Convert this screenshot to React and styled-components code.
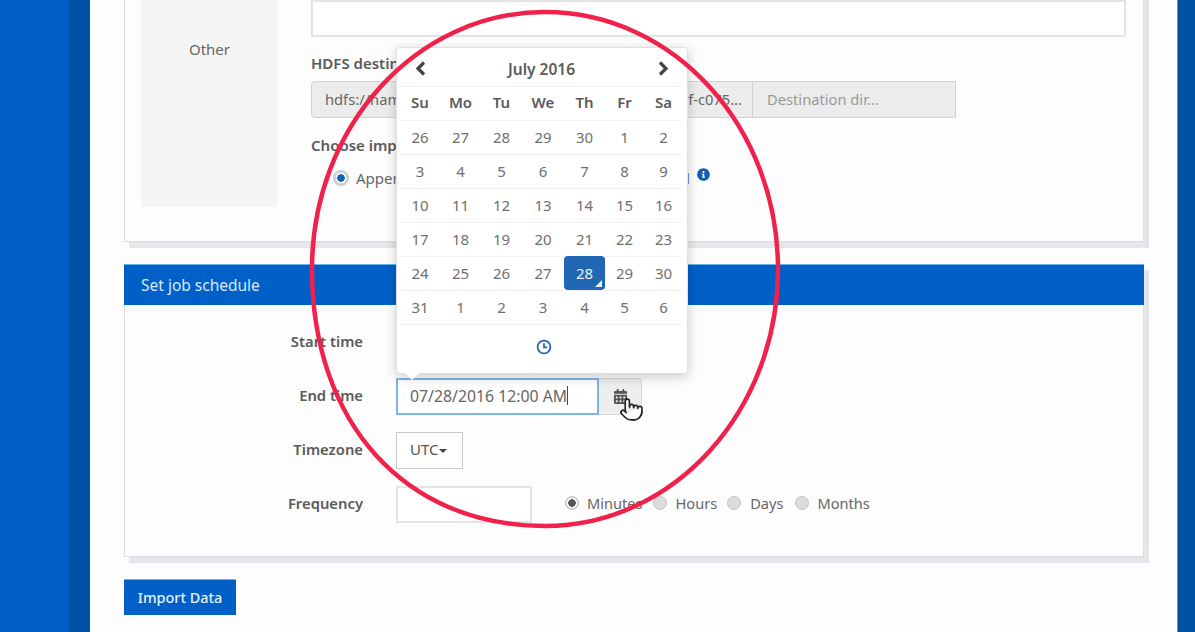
import React from "react";
import styled, { createGlobalStyle } from "styled-components";
import { FaCalendarAlt, FaInfoCircle } from "react-icons/fa";
import { Pointer } from "lucide-react";

const GlobalStyle = createGlobalStyle`
  html, body {
    margin: 0;
    padding: 0;
    background: #fdfdfd;
    overflow: hidden;
  }
  * { box-sizing: border-box; }
`;

const Page = styled.div`
  position: relative;
  display: grid;
  grid-template-columns: 69px 21px 1fr 18px;
  width: 1195px;
  height: 632px;
  overflow: hidden;
  font-family: "Noto Sans", sans-serif;
  font-size: 15px;
  line-height: 20px;
  color: #666;
`;

const SideBlue = styled.div`
  background: #0060c8;
`;

const SideDark = styled.div`
  background: #0050a6;
  border-left: ${({ $edge }) => ($edge ? "1px solid #3d9be8" : "none")};
`;

const Main = styled.main`
  padding: 0 33px 0 34px;
  background: #fdfdfd;
`;

const Card = styled.section`
  background: #fdfdfd;
  border: 1px solid #dcdce1;
  box-shadow: 5px 6px 0 #e6e6ea;
`;

const SourceCard = styled(Card)`
  display: grid;
  grid-template-columns: 137px 1fr;
  column-gap: 33px;
  margin-top: -40px;
  height: 282px;
  padding-left: 16px;
  padding-right: 17px;
`;

const SourceType = styled.div`
  height: 246px;
  padding-top: 78px;
  text-align: center;
  background: #f5f5f5;
`;

const SourceForm = styled.div`
  padding-top: 39px;
`;

const TextBox = styled.input`
  display: block;
  width: ${({ $width }) => $width || "100%"};
  height: 37px;
  padding: 0 14px;
  border: 2px solid #e4e4e4;
  background: #fff;
  outline: none;
`;

const FieldLabel = styled.div`
  margin-top: ${({ $top }) => $top}px;
  font-weight: 600;
  color: #5a5a5a;
`;

const PathGroup = styled.div`
  display: grid;
  grid-template-columns: 442px 203px;
  width: 645px;
  height: 37px;
  margin-top: 8px;
  font-size: 14.7px;
`;

const PathPart = styled.div`
  display: flex;
  justify-content: space-between;
  align-items: center;
  padding: 0 10px 2px 13px;
  background: #ececec;
  border: 1px solid #d2d2d2;
  border-radius: 4px 0 0 4px;
  white-space: nowrap;
`;

const DirPart = styled.div`
  display: flex;
  align-items: center;
  padding: 0 14px 2px;
  background: #ececec;
  border: 1px solid #d2d2d2;
  border-left: none;
  color: #999;
`;

const ModeRow = styled.div`
  display: flex;
  align-items: center;
  height: 20px;
  margin-top: 13px;
  padding-left: 22px;
`;

const RadioDot = styled.span`
  flex: none;
  width: ${({ $size }) => $size}px;
  height: ${({ $size }) => $size}px;
  margin-right: ${({ $gap }) => $gap}px;
  border-radius: 50%;
  background: ${({ $on, $tone }) =>
    $on
      ? `radial-gradient(circle, ${$tone} 0 3.5px, #fff 4px 5px, #d4d4d4 5.5px)`
      : "#dcdcdc"};
  border: 1px solid #c4c4c4;
`;

const ModeSpacer = styled.span`
  width: ${({ $width }) => $width}px;
`;

const InfoIcon = styled(FaInfoCircle)`
  margin: -8px 0 0 7px;
  width: 13px;
  height: 13px;
  color: #0f5fb5;
`;

const ScheduleCard = styled(Card)`
  margin-top: 22px;
`;

const ScheduleHeader = styled.h2`
  margin: -1px -1px 0;
  height: 41px;
  padding: 0 17px;
  font-size: 15.5px;
  font-weight: 400;
  line-height: 40px;
  color: #d5e9fb;
  background: #0060c8;
  border-top: 1px solid #66b2ee;
`;

const ScheduleBody = styled.div`
  display: grid;
  row-gap: 17px;
  padding: 19px 0 33px;
`;

const ScheduleRow = styled.div`
  display: grid;
  grid-template-columns: 238px 1fr;
  column-gap: 33px;
  align-items: center;
  height: 37px;
`;

const RowLabel = styled.div`
  padding-bottom: 4px;
  text-align: right;
  font-size: 14.8px;
  font-weight: 600;
  color: #5a5a5a;
`;

const Controls = styled.div`
  display: flex;
  align-items: center;
`;

const DateField = styled.div`
  position: relative;
  display: grid;
  grid-template-columns: 203px 43px;
  height: 37px;
`;

const DateText = styled.div`
  display: flex;
  align-items: center;
  padding: 0 12px 2px 12px;
  background: #fff;
  font-size: 15.8px;
  white-space: nowrap;
  border: ${({ $focus }) => ($focus ? "2px solid #7db4ea" : "1px solid #d8d8d8")};
`;

const Caret = styled.span`
  width: 1px;
  height: 19px;
  background: #444;
`;

const CalendarAddon = styled.div`
  display: flex;
  align-items: center;
  justify-content: center;
  background: #eee;
  border: 1px solid #d6d6d6;
  border-left: none;
  border-radius: 0 4px 4px 0;
  color: #555;
`;

const HandCursor = styled(Pointer)`
  position: absolute;
  left: 223px;
  top: 17px;
  width: 25px;
  height: 29px;
  fill: #fff;
  stroke: #222;
  stroke-width: 1.6;
`;

const DropButton = styled.div`
  display: flex;
  align-items: center;
  width: 67px;
  height: 37px;
  padding: 0 0 3px 13px;
  border: 1px solid #c8c8c8;
  background: #fff;
  color: #555;
`;

const DownCaret = styled.span`
  width: 0;
  height: 0;
  margin-top: 3px;
  border-left: 4px solid transparent;
  border-right: 4px solid transparent;
  border-top: 4px solid #444;
`;

const UnitOption = styled.label`
  display: flex;
  align-items: center;
  margin-left: ${({ $left }) => $left}px;
  padding-bottom: 4px;
  font-size: 14.6px;
`;

const ImportButton = styled.button`
  display: block;
  width: 112px;
  height: 36px;
  margin-top: 22px;
  padding: 0;
  border: none;
  border-top: 1px solid #66b2ee;
  background: #0060c8;
  color: #e8f2fc;
  font: 500 14.4px "Noto Sans", sans-serif;
`;

const Popup = styled.div`
  position: absolute;
  left: 0;
  bottom: calc(100% + 4px);
  z-index: 5;
  width: 292px;
  height: 327px;
  padding: 4px 4px 0 3px;
  background: #fff;
  border: 1px solid #e0e0e0;
  border-radius: 4px;
  box-shadow: 0 3px 12px rgba(0, 0, 0, 0.2);

  &::after {
    content: "";
    position: absolute;
    left: 8px;
    bottom: -7px;
    border-left: 7px solid transparent;
    border-right: 7px solid transparent;
    border-top: 7px solid #fff;
  }
`;

const CalGrid = styled.div`
  display: grid;
  grid-template-columns: 40px 41px 41px 42px 41px 39px 39px;
  grid-auto-rows: 34px;
  align-items: center;
  justify-items: center;
`;

const MonthBar = styled.div`
  grid-column: 1 / -1;
  justify-self: stretch;
  display: grid;
  grid-template-columns: 40px 1fr 40px;
  align-items: center;
  justify-items: center;
  height: 34px;
  font-size: 15.5px;
  font-weight: 600;
  color: #5a5a5a;
`;

const Chevron = styled.svg`
  width: 13px;
  height: 15px;
  fill: none;
  stroke: #444;
  stroke-width: 3.2;
  margin-top: -2px;
`;

const WeekDay = styled.div`
  justify-self: stretch;
  align-self: stretch;
  line-height: 31px;
  text-align: center;
  font-weight: 600;
  color: #5a5a5a;
  border-top: 1px solid #f3f3f3;
`;

const Day = styled.div`
  position: relative;
  justify-self: stretch;
  align-self: stretch;
  line-height: 33px;
  text-align: center;
  color: ${({ $selected }) => ($selected ? "#e9f1fa" : "#6f6f6f")};
  background: ${({ $selected }) => ($selected ? "#2068b4" : "transparent")};
  border-radius: ${({ $selected }) => ($selected ? "4px" : "0")};
  border-top: 1px solid ${({ $selected }) => ($selected ? "#2068b4" : "#f3f3f3")};

  ${({ $selected }) =>
    $selected &&
    `&::after {
      content: "";
      position: absolute;
      right: 3px;
      bottom: 3px;
      border-left: 7px solid transparent;
      border-bottom: 7px solid #e9f1fa;
    }`}
`;

const ClockRow = styled.div`
  display: flex;
  justify-content: center;
  align-items: center;
  height: 44px;
  border-top: 1px solid #f3f3f3;
  padding: 1px 0 0 5px;
`;

const Annotation = styled.svg`
  position: absolute;
  left: 0;
  top: 0;
  z-index: 10;
  width: 1195px;
  height: 632px;
  pointer-events: none;
`;

const weekDays = ["Su", "Mo", "Tu", "We", "Th", "Fr", "Sa"];
const days = [
  26, 27, 28, 29, 30, 1, 2, 3, 4, 5, 6, 7, 8, 9, 10, 11, 12, 13, 14, 15, 16, 17,
  18, 19, 20, 21, 22, 23, 24, 25, 26, 27, 28, 29, 30, 31, 1, 2, 3, 4, 5, 6,
];

const DatePopup = () => (
  <Popup>
    <CalGrid>
      <MonthBar>
        <Chevron viewBox="0 0 13 15">
          <path d="M10 1.5 4 7.5l6 6" />
        </Chevron>
        <span>July 2016</span>
        <Chevron viewBox="0 0 13 15">
          <path d="M3 1.5l6 6-6 6" />
        </Chevron>
      </MonthBar>
      {weekDays.map((d) => (
        <WeekDay key={d}>{d}</WeekDay>
      ))}
      {days.map((d, i) => (
        <Day key={i} $selected={i === 32}>
          {d}
        </Day>
      ))}
    </CalGrid>
    <ClockRow>
      <svg width="16" height="16" viewBox="0 0 16 16" fill="none" stroke="#2a68b0" strokeWidth="1.8">
        <circle cx="8" cy="8" r="6.4" />
        <path d="M8 4.2V8.4h3.2" />
      </svg>
    </ClockRow>
  </Popup>
);

const App = () => {
  return (
    <Page>
      <GlobalStyle />
      <SideBlue />
      <SideDark />
      <Main>
        <SourceCard>
          <SourceType>Other</SourceType>
          <SourceForm>
            <TextBox readOnly />
            <FieldLabel $top={16}>HDFS destination</FieldLabel>
            <PathGroup>
              <PathPart>
                <span>hdfs://namenode</span>
                <span>f-c075...</span>
              </PathPart>
              <DirPart>Destination dir...</DirPart>
            </PathGroup>
            <FieldLabel $top={17}>Choose import mode</FieldLabel>
            <ModeRow>
              <RadioDot $on $tone="#0f62c0" $size={16} $gap={7} />
              <span>Append</span>
              <ModeSpacer $width={189} />
              <span>Overwrite all</span>
              <InfoIcon />
            </ModeRow>
          </SourceForm>
        </SourceCard>

        <ScheduleCard>
          <ScheduleHeader>Set job schedule</ScheduleHeader>
          <ScheduleBody>
            <ScheduleRow>
              <RowLabel>Start time</RowLabel>
              <Controls>
                <DateField>
                  <DateText />
                  <CalendarAddon />
                </DateField>
              </Controls>
            </ScheduleRow>
            <ScheduleRow>
              <RowLabel>End time</RowLabel>
              <Controls>
                <DateField>
                  <DatePopup />
                  <DateText $focus>
                    07/28/2016 12:00 AM
                    <Caret />
                  </DateText>
                  <CalendarAddon>
                    <FaCalendarAlt size={15} />
                  </CalendarAddon>
                  <HandCursor />
                </DateField>
              </Controls>
            </ScheduleRow>
            <ScheduleRow>
              <RowLabel>Timezone</RowLabel>
              <Controls>
                <DropButton>
                  UTC
                  <DownCaret />
                </DropButton>
              </Controls>
            </ScheduleRow>
            <ScheduleRow>
              <RowLabel>Frequency</RowLabel>
              <Controls>
                <TextBox $width="136px" readOnly />
                <UnitOption $left={33}>
                  <RadioDot $on $tone="#555" $size={14} $gap={8} />
                  Minutes
                </UnitOption>
                <UnitOption $left={10}>
                  <RadioDot $size={14} $gap={9} />
                  Hours
                </UnitOption>
                <UnitOption $left={10}>
                  <RadioDot $size={14} $gap={9} />
                  Days
                </UnitOption>
                <UnitOption $left={11}>
                  <RadioDot $size={14} $gap={9} />
                  Months
                </UnitOption>
              </Controls>
            </ScheduleRow>
          </ScheduleBody>
        </ScheduleCard>

        <ImportButton>Import Data</ImportButton>
      </Main>
      <SideDark $edge />

      <Annotation viewBox="0 0 1195 632">
        <path
          d="M545 12C674 12 778 127 778 269C778 411 674 526 545 526C405 526 312 423 312 269C312 127 416 12 545 12Z"
          fill="none"
          stroke="#f0214a"
          strokeWidth="4.5"
        />
      </Annotation>
    </Page>
  );
};

export default App;
